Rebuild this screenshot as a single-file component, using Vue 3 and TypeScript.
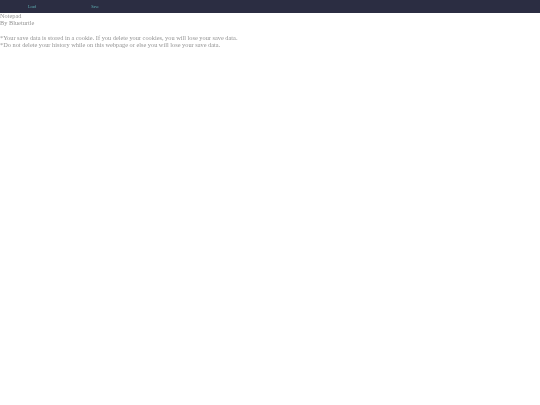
<script setup lang="ts">
const links: string[] = ['Load', 'Save']
</script>

<template>
  <div class="page">
    <nav class="bar">
      <a v-for="l in links" :key="l" class="link">{{ l }}</a>
    </nav>
    <main class="content">
      <p>Notepad</p>
      <p>By Blueturtle</p>
      <p class="gap">*Your save data is stored in a cookie. If you delete your cookies, you will lose your save data.</p>
      <p>*Do not delete your history while on this webpage or else you will lose your save data.</p>
    </main>
  </div>
</template>

<style scoped>
.page {
  width: 540px;
  height: 405px;
  background: #fff;
  font-family: "Liberation Serif", serif;
  overflow: hidden;
}
.bar {
  height: 12.5px;
  background: #2b2d42;
  display: flex;
  padding-left: 28px;
  gap: 55px;
  align-items: center;
}
.link {
  font-size: 4px;
  color: #5fb0b4;
  filter: blur(0.3px);
}
.content {
  margin-top: -0.7px;
  font-size: 6.33px;
  line-height: 7.4px;
  color: #949494;
  filter: blur(0.3px);
}
p {
  margin: 0;
}
.gap {
  margin-top: 7.4px;
}
</style>
